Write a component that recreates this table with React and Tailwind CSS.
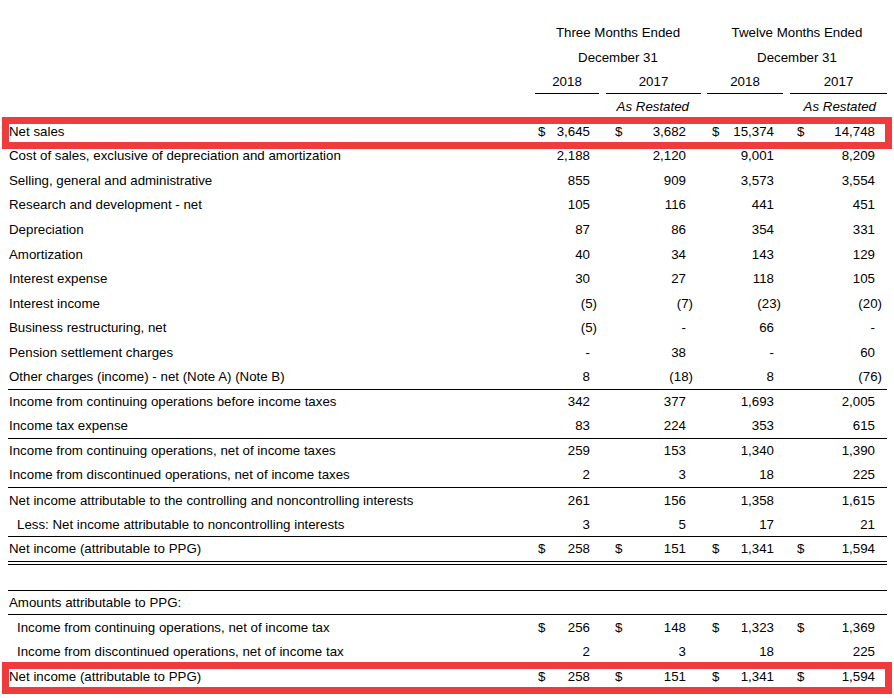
const cols = [
  { w: 'w-[64px]', pl: 'pl-[3px]', pr: 'pr-[9px]', neg: 'mr-[-7px]' },
  { w: 'w-[95px]', pl: 'pl-[9px]', pr: 'pr-[15px]', neg: 'mr-[-7px]' },
  { w: 'w-[76px]', pl: 'pl-[5px]', pr: 'pr-[9px]', neg: 'mr-[-7px]' },
  { w: 'w-[97px]', pl: 'pl-[7px]', pr: 'pr-[12px]', neg: 'mr-[-7px]' },
];

const rows = [
  { label: 'Net sales', v: ['3,645', '3,682', '15,374', '14,748'], dollar: true, red: true },
  { label: 'Cost of sales, exclusive of depreciation and amortization', v: ['2,188', '2,120', '9,001', '8,209'] },
  { label: 'Selling, general and administrative', v: ['855', '909', '3,573', '3,554'] },
  { label: 'Research and development - net', v: ['105', '116', '441', '451'] },
  { label: 'Depreciation', v: ['87', '86', '354', '331'] },
  { label: 'Amortization', v: ['40', '34', '143', '129'] },
  { label: 'Interest expense', v: ['30', '27', '118', '105'] },
  { label: 'Interest income', v: ['(5)', '(7)', '(23)', '(20)'] },
  { label: 'Business restructuring, net', v: ['(5)', '-', '66', '-'] },
  { label: 'Pension settlement charges', v: ['-', '38', '-', '60'] },
  { label: 'Other charges (income) - net (Note A) (Note B)', v: ['8', '(18)', '8', '(76)'], line: true },
  { label: 'Income from continuing operations before income taxes', v: ['342', '377', '1,693', '2,005'] },
  { label: 'Income tax expense', v: ['83', '224', '353', '615'], line: true },
  { label: 'Income from continuing operations, net of income taxes', v: ['259', '153', '1,340', '1,390'] },
  { label: 'Income from discontinued operations, net of income taxes', v: ['2', '3', '18', '225'], line: true },
  { label: 'Net income attributable to the controlling and noncontrolling interests', v: ['261', '156', '1,358', '1,615'] },
  { label: 'Less: Net income attributable to noncontrolling interests', v: ['3', '5', '17', '21'], indent: true, line: true },
  { label: 'Net income (attributable to PPG)', v: ['258', '151', '1,341', '1,594'], dollar: true, line: true },
];

const ppgRows = [
  { label: 'Income from continuing operations, net of income tax', v: ['256', '148', '1,323', '1,369'], dollar: true, indent: true },
  { label: 'Income from discontinued operations, net of income tax', v: ['2', '3', '18', '225'], indent: true },
  { label: 'Net income (attributable to PPG)', v: ['258', '151', '1,341', '1,594'], dollar: true, red: true },
];

function Gap({ w }) {
  return <div className={w} />;
}

function Cell({ col, value, dollar }) {
  const neg = value.startsWith('(');
  return (
    <div className={`${col.w} ${col.pl} ${col.pr} flex justify-between items-center`}>
      <span>{dollar ? '$' : ''}</span>
      <span className={neg ? col.neg : ''}>{value}</span>
    </div>
  );
}

function Row({ row }) {
  return (
    <div className={`relative flex items-center h-[24.6px] ${row.line ? 'border-b border-black' : ''}`}>
      <div className={`w-[527px] ${row.indent ? 'pl-[9px]' : 'pl-px'}`}>{row.label}</div>
      <Cell col={cols[0]} value={row.v[0]} dollar={row.dollar} />
      <Gap w="w-[7px]" />
      <Cell col={cols[1]} value={row.v[1]} dollar={row.dollar} />
      <Gap w="w-[6px]" />
      <Cell col={cols[2]} value={row.v[2]} dollar={row.dollar} />
      <Gap w="w-[7px]" />
      <Cell col={cols[3]} value={row.v[3]} dollar={row.dollar} />
      {row.red && (
        <div className="absolute -top-[2px] -bottom-[5px] -left-[6px] -right-[5px] border-[7px] border-[#f03b3c]" />
      )}
    </div>
  );
}

export default function App() {
  return (
    <div className="min-h-screen bg-white text-black text-[13.3px] leading-none font-['Liberation_Sans',Arial,sans-serif]">
      <div className="w-[879px] ml-[8px] pt-[20.6px]">
        {/* column headings */}
        <div className="flex items-center h-[24.6px]">
          <div className="w-[527px]" />
          <div className="w-[166px] text-center">Three Months Ended</div>
          <Gap w="w-[6px]" />
          <div className="w-[180px] text-center">Twelve Months Ended</div>
        </div>
        <div className="flex items-center h-[24.6px]">
          <div className="w-[527px]" />
          <div className="w-[166px] text-center">December 31</div>
          <Gap w="w-[6px]" />
          <div className="w-[180px] text-center">December 31</div>
        </div>
        <div className="flex h-[24.6px]">
          <div className="w-[527px]" />
          <div className="w-[64px] border-b border-black flex items-center justify-center">2018</div>
          <Gap w="w-[7px]" />
          <div className="w-[95px] border-b border-black flex items-center justify-center">2017</div>
          <Gap w="w-[6px]" />
          <div className="w-[76px] border-b border-black flex items-center justify-center">2018</div>
          <Gap w="w-[7px]" />
          <div className="w-[97px] border-b border-black flex items-center justify-center">2017</div>
        </div>
        <div className="flex items-center h-[24.6px] italic">
          <div className="w-[527px]" />
          <div className="w-[64px]" />
          <Gap w="w-[7px]" />
          <div className="w-[95px] text-right pr-[12px]">As Restated</div>
          <Gap w="w-[6px]" />
          <div className="w-[76px]" />
          <Gap w="w-[7px]" />
          <div className="w-[97px] text-right pr-[11px]">As Restated</div>
        </div>

        {rows.map((r, i) => (
          <Row key={i} row={r} />
        ))}
        <div className="h-[3px] border-b border-black" />

        <div className="h-[25px]" />
        <div className="flex items-center h-[25.5px] border-y border-black pl-px">Amounts attributable to PPG:</div>
        {ppgRows.map((r, i) => (
          <Row key={i} row={r} />
        ))}
      </div>
    </div>
  );
}
